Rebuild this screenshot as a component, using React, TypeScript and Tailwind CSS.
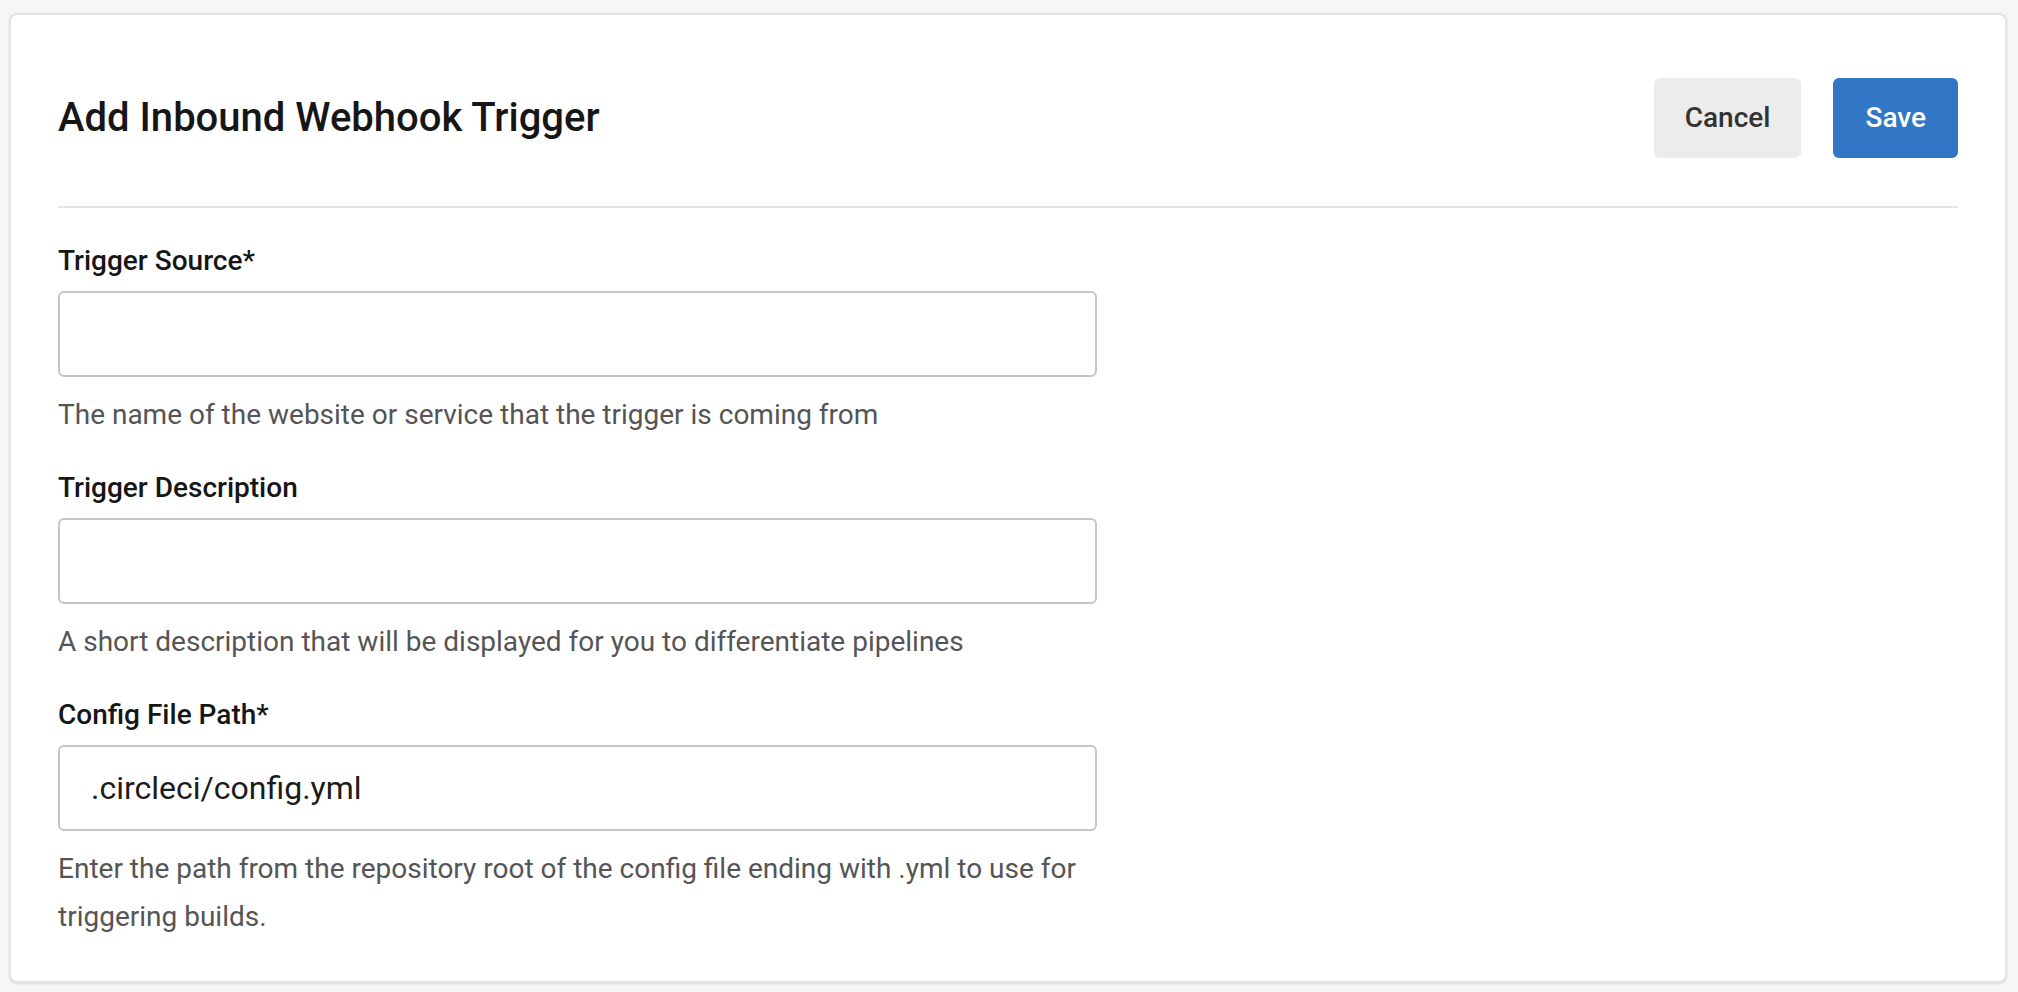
import React from "react";

type FieldProps = {
  label: string;
  helper: string;
  value?: string;
};

function Field({ label, helper, value }: FieldProps) {
  return (
    <div className="flex w-[1039px] flex-col">
      <label className="mb-[13px] text-[28px] font-medium leading-[34px] text-[#161616]">{label}</label>
      <input
        readOnly
        value={value ?? ""}
        className="h-[86px] w-full rounded-[6px] border-2 border-[#c6c6c6] bg-white pl-[31px] text-[32px] text-[#1b1b1b] outline-none"
      />
      <p className="mt-[14px] text-[28px] leading-[48px] text-[#555555]">{helper}</p>
    </div>
  );
}

export default function App() {
  return (
    <div className="min-h-screen bg-[#f6f6f6] pl-[9px] pt-[13px] font-['Roboto',sans-serif]">
      <div className="h-[970px] w-[1998px] rounded-[8px] border-2 border-[#e3e3e3] bg-white pl-[47px] pr-[47px] pt-[63px] shadow-sm">
        <div className="flex items-center justify-between">
          <h1 className="text-[40px] font-medium leading-[48px] text-[#161616]">Add Inbound Webhook Trigger</h1>
          <div className="flex gap-[32px]">
            <button className="h-[80px] rounded-[6px] bg-[#ececec] px-[31px] text-[28px] font-medium text-[#333333]">
              Cancel
            </button>
            <button className="h-[80px] rounded-[6px] bg-[#3277c5] px-[32px] text-[28px] font-medium text-white">
              Save
            </button>
          </div>
        </div>
        <div className="mt-[48px] h-[2px] bg-[#e4e4e4]" />
        <div className="mt-[36px] flex flex-col gap-[32px]">
          <Field label="Trigger Source*" helper="The name of the website or service that the trigger is coming from" />
          <Field
            label="Trigger Description"
            helper="A short description that will be displayed for you to differentiate pipelines"
          />
          <Field
            label="Config File Path*"
            value=".circleci/config.yml"
            helper="Enter the path from the repository root of the config file ending with .yml to use for triggering builds."
          />
        </div>
      </div>
    </div>
  );
}
